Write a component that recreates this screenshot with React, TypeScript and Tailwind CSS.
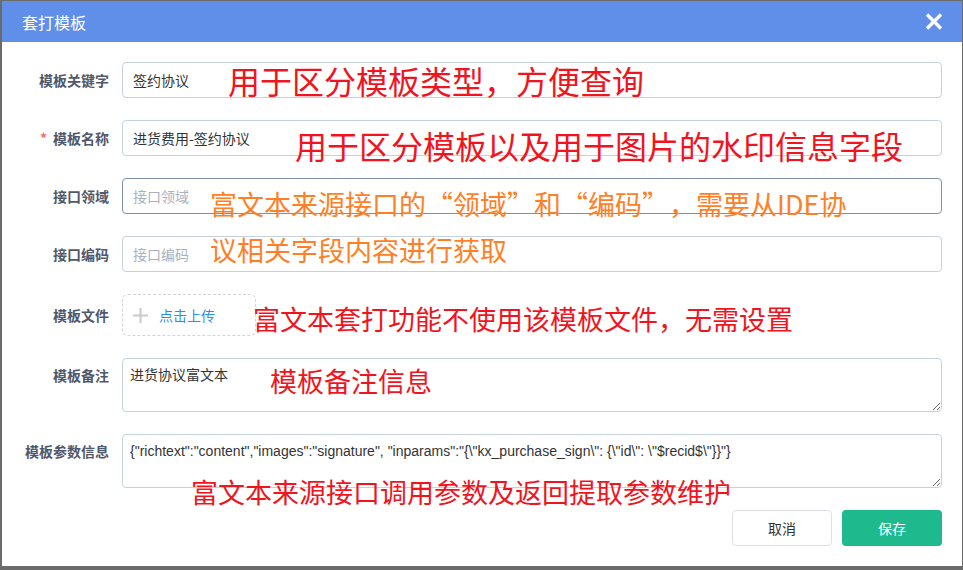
const cjk = '"Noto Sans CJK SC", "Noto Sans", sans-serif'
const json = '{"richtext":"content","images":"signature", "inparams":"{\\"kx_purchase_sign\\": {\\"id\\": \\"$recid$\\"}}"}'

function Label({ text, required }: { text: string; required?: boolean }) {
  return (
    <div className="w-[107px] shrink-0 text-right text-[14px] font-semibold text-[#50586b]">
      {required && <span className="mr-[6px] text-[#f56c6c]">*</span>}
      {text}
    </div>
  )
}

function Field({ value, placeholder, dark }: { value?: string; placeholder?: string; dark?: boolean }) {
  return (
    <input
      readOnly
      defaultValue={value}
      placeholder={placeholder}
      className={
        'h-[36px] flex-1 rounded-[4px] border bg-white px-[10px] text-[14px] text-[#333] outline-none placeholder:text-[#a9b1be] ' +
        (dark ? 'border-[#7f90a6]' : 'border-[#c6d1de]')
      }
    />
  )
}

function Note({ text, className }: { text: string; className: string }) {
  return (
    <div className={'pointer-events-none absolute whitespace-nowrap leading-none [text-spacing-trim:space-all] ' + className}>
      {text}
    </div>
  )
}

export default function App() {
  return (
    <div className="h-[570px] w-[963px] overflow-hidden bg-[#6b6b6b] pl-[2px] pt-[1px]" style={{ fontFamily: cjk }}>
      <div className="relative flex h-[565px] w-[960px] flex-col bg-white">
        <div className="flex h-[41px] items-center justify-between bg-[#5f8fe8] pl-[20px] pr-[19px]">
          <span className="text-[16px] text-white">套打模板</span>
          <svg width="18" height="17" viewBox="0 0 18 17">
            <path d="M2 1.5 L16 15.5 M16 1.5 L2 15.5" stroke="white" strokeWidth="3.4" />
          </svg>
        </div>

        <div className="flex flex-col gap-[22px] pl-0 pr-[20px] pt-[20px]">
          <div className="flex items-center gap-[13px]">
            <Label text="模板关键字" />
            <Field value="签约协议" />
          </div>
          <div className="flex items-center gap-[13px]">
            <Label text="模板名称" required />
            <Field value="进货费用-签约协议" />
          </div>
          <div className="flex items-center gap-[13px]">
            <Label text="接口领域" />
            <Field placeholder="接口领域" dark />
          </div>
          <div className="flex items-center gap-[13px]">
            <Label text="接口编码" />
            <Field placeholder="接口编码" />
          </div>
          <div className="flex items-center gap-[13px]">
            <Label text="模板文件" />
            <div className="flex h-[42px] w-[134px] items-center gap-[11px] rounded-[6px] border border-dashed border-[#d4d4d4] pl-[10px]">
              <svg width="15" height="15" viewBox="0 0 15 15">
                <path d="M7.5 0 V15 M0 7.5 H15" stroke="#cacaca" strokeWidth="2" />
              </svg>
              <span className="text-[14px] text-[#2b8ff0]">点击上传</span>
            </div>
          </div>
          <div className="flex items-start gap-[13px]">
            <div className="pt-[7px]">
              <Label text="模板备注" />
            </div>
            <textarea
              readOnly
              defaultValue="进货协议富文本"
              className="h-[54px] flex-1 rounded-[4px] border border-[#c6d1de] px-[7px] py-[5px] text-[14px] leading-[20px] text-[#333] outline-none"
            />
          </div>
          <div className="flex items-start gap-[13px]">
            <div className="pt-[7px]">
              <Label text="模板参数信息" />
            </div>
            <textarea
              readOnly
              defaultValue={json}
              className="h-[54px] flex-1 rounded-[4px] border border-[#c6d1de] px-[7px] py-[6px] text-[14px] leading-[20px] text-[#333] outline-none"
              style={{ fontFamily: '"Liberation Sans", Arial, sans-serif' }}
            />
          </div>
          <div className="flex justify-end gap-[10px]">
            <button className="h-[36px] w-[100px] rounded-[4px] border border-[#dcdfe6] bg-white text-[14px] text-[#333]">取消</button>
            <button className="h-[36px] w-[100px] rounded-[4px] bg-[#1fb98e] text-[14px] text-white">保存</button>
          </div>
        </div>

        <Note text="用于区分模板类型，方便查询" className="left-[226px] top-[63px] text-[32px] text-[#f0141e]" />
        <Note text="用于区分模板以及用于图片的水印信息字段" className="left-[293px] top-[128px] text-[32px] text-[#f0141e]" />
        <Note text="富文本来源接口的“领域”和“编码”，需要从IDE协" className="left-[208px] top-[189px] text-[27px] text-[#ff7f27]" />
        <Note text="议相关字段内容进行获取" className="left-[208px] top-[235px] text-[27px] text-[#ff7f27]" />
        <Note text="富文本套打功能不使用该模板文件，无需设置" className="left-[251px] top-[304px] text-[27px] text-[#f0141e]" />
        <Note text="模板备注信息" className="left-[268px] top-[366px] text-[27px] text-[#f0141e]" />
        <Note text="富文本来源接口调用参数及返回提取参数维护" className="left-[189px] top-[477px] text-[27px] text-[#f0141e]" />
      </div>
    </div>
  )
}
